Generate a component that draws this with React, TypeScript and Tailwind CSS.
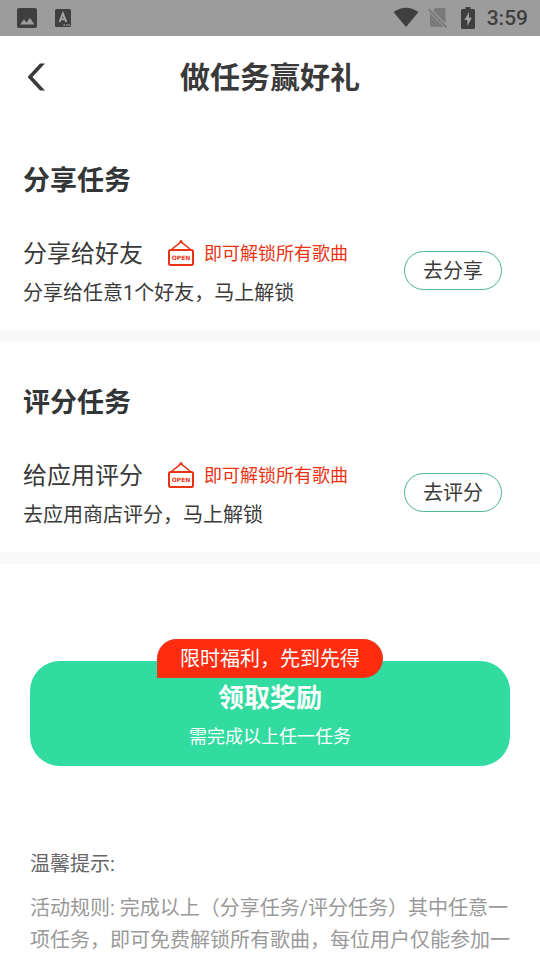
import React from "react";

const RED = "#ea3314";

function StatusBar() {
  return (
    <div className="flex h-9 items-center justify-between bg-[#9c9c9c] pr-3 pl-4 text-[#3f3f3f]">
      <div className="flex items-center gap-4">
        <svg className="h-[22px] w-[22px]" viewBox="0 0 22 22" aria-hidden="true">
          <rect x="1" y="1" width="20" height="20" rx="2" fill="currentColor" />
          <path d="M4 17.5 L8 12.5 L10.5 15.5 L14 11 L18.5 17.5 Z" fill="#9c9c9c" />
        </svg>
        <svg className="h-[22px] w-[18px]" viewBox="0 0 18 22" aria-hidden="true">
          <rect x="1" y="2" width="16" height="18" rx="1.5" fill="currentColor" />
          <path d="M5.5 15 L8.9 6.5 L12.3 15 M6.6 12.3 H11.2" fill="none" stroke="#a4a4a4" strokeWidth="2" />
          <path d="M9.5 18 h1.5 M12 18 h1.5 M14.5 18 h1.5" stroke="#9c9c9c" strokeWidth="1.5" />
        </svg>
      </div>
      <div className="flex items-center">
        <svg className="h-[22px] w-[26px]" viewBox="0 0 26 22" aria-hidden="true">
          <path d="M0.5 5 Q13 -3.5 25.5 5 L13 20 Z" fill="currentColor" />
        </svg>
        <svg className="ml-2 h-[22px] w-[22px] text-[#7a7a7a]" viewBox="0 0 22 22" aria-hidden="true">
          <path d="M8.5 1 H17 Q18.5 1 18.5 2.5 V16.5 L6 3.6 Z M3 6 L16.6 20 H4.5 Q3 20 3 18.5 Z" fill="currentColor" />
          <path d="M1.5 2 L19.5 20.5" stroke="currentColor" strokeWidth="1.8" />
        </svg>
        <svg className="ml-3 h-[22px] w-[14px]" viewBox="0 0 14 22" aria-hidden="true">
          <path d="M4.5 0 H9.5 V2 H12.5 Q14 2 14 3.5 V20.5 Q14 22 12.5 22 H1.5 Q0 22 0 20.5 V3.5 Q0 2 1.5 2 H4.5 Z" fill="currentColor" />
          <path d="M8 5 L3.5 13 H6.4 V19 L10.8 10.8 H8 Z" fill="#a4a4a4" />
        </svg>
        <span className="ml-3 text-[21px] leading-9 font-medium">3:59</span>
      </div>
    </div>
  );
}

function OpenSign() {
  return (
    <svg className="h-7 w-7" viewBox="0 0 28 28" fill="none" stroke={RED} aria-hidden="true">
      <rect x="2" y="10" width="24" height="15" rx="1.5" strokeWidth="2" />
      <path d="M4.5 9.5 L14 1.8 L23.5 9.5" strokeWidth="1.5" />
      <circle cx="14" cy="1.5" r="1.5" fill={RED} stroke="none" />
      <text x="14" y="19.8" textAnchor="middle" fill={RED} stroke="none" className="font-['DejaVu_Sans','Liberation_Sans',sans-serif] text-[6px] font-bold">
        OPEN
      </text>
    </svg>
  );
}

type Task = { heading: string; title: string; detail: string; action: string };

const tasks: Task[] = [
  { heading: "分享任务", title: "分享给好友", detail: "分享给任意1个好友，马上解锁", action: "去分享" },
  { heading: "评分任务", title: "给应用评分", detail: "去应用商店评分，马上解锁", action: "去评分" },
];

function TaskSection({ task }: { task: Task }) {
  return (
    <section className="border-b-12 border-[#f9f9f9] pt-[41px] pr-[38px] pb-[17px] pl-[23px]">
      <h2 className="text-[27px] leading-10 font-bold text-[#333637]">{task.heading}</h2>
      <div className="mt-[34px] flex items-start justify-between">
        <div>
          <div className="flex h-[38px] items-center">
            <h3 className="text-2xl leading-[38px]">{task.title}</h3>
            <span className="ml-6 flex items-center gap-[9px] text-lg leading-7 text-[#ea3314]">
              <OpenSign />
              即可解锁所有歌曲
            </span>
          </div>
          <p className="text-xl leading-10">{task.detail}</p>
        </div>
        <button
          type="button"
          className="mt-4 h-[39px] w-[98px] shrink-0 rounded-full border border-[#4bb592] text-xl leading-9"
        >
          {task.action}
        </button>
      </div>
    </section>
  );
}

export default function App() {
  return (
    <div className="min-h-screen bg-white font-['Roboto','Noto_Sans_CJK_SC',sans-serif] text-[#3a3a3a]" lang="zh-CN">
      <StatusBar />
      <header className="grid h-[84px] grid-cols-[72px_1fr_72px] items-center">
        <button type="button" aria-label="返回" className="flex h-full items-center pb-0.5 pl-[27px]">
          <svg className="h-7 w-[18px]" viewBox="0 0 18 28" aria-hidden="true">
            <path d="M13 0.5 H18 L5.5 14 L18 27.5 H13 L1 14.5 V13.5 Z" fill="#3a3a3a" />
          </svg>
        </button>
        <h1 className="text-center text-3xl leading-10 font-bold">做任务赢好礼</h1>
      </header>
      <main>
        {tasks.map((task) => (
          <TaskSection key={task.heading} task={task} />
        ))}
        <div className="relative mx-[30px] mt-[97px]">
          <button
            type="button"
            className="flex h-[105px] w-full flex-col items-center rounded-[30px] bg-[#32dca0] pt-[17px] text-white"
          >
            <span className="text-[26px] leading-10 font-bold">领取奖励</span>
            <span className="text-lg leading-[38px]">需完成以上任一任务</span>
          </button>
          <span className="pointer-events-none absolute -top-[22px] left-1/2 -translate-x-1/2 rounded-[20px] rounded-bl-none border border-[#d8452b]/60 bg-[#ff2c10] px-[22px] pt-px text-xl leading-9 whitespace-nowrap text-white">
            限时福利，先到先得
          </span>
        </div>
        <section className="mx-[30px] mt-[82px] text-xl">
          <h2 className="leading-8 text-[#666]">温馨提示:</h2>
          <p className="mt-3 leading-8 text-[#999]">
            活动规则: 完成以上（分享任务/评分任务）其中任意一项任务，即可免费解锁所有歌曲，每位用户仅能参加一
          </p>
        </section>
      </main>
    </div>
  );
}
